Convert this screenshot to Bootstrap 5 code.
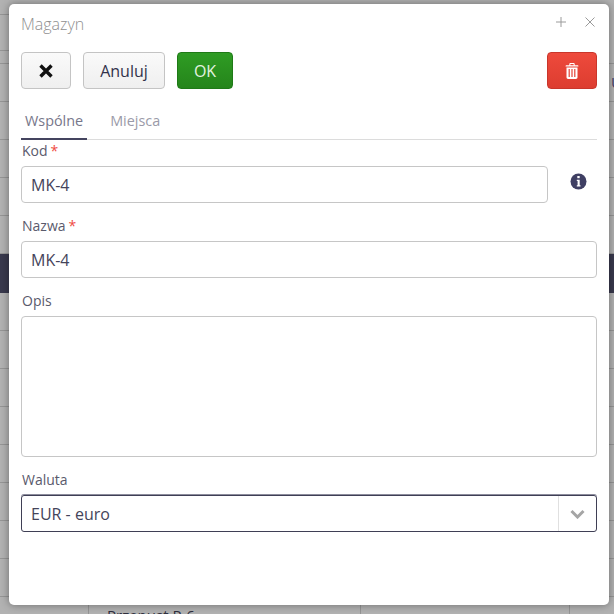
<!DOCTYPE html>
<html lang="pl">
<head>
  <meta charset="UTF-8" />
  <title>Magazyn</title>
  <link href="https://cdn.jsdelivr.net/npm/bootstrap@5.3.3/dist/css/bootstrap.min.css" rel="stylesheet">
  <style>
    html, body { height:100%; overflow:hidden }
    body { background:#fff; font-family:"Open Sans", sans-serif; color:#4a4a5a; position:relative }

    /* page behind the dialog */
    .bg-rows { height:614px; overflow:hidden }
    .bg-row { height:38px; border-bottom:1px solid #d6d6d6; display:flex; color:#44445a; font-size:15px }
    .bg-row.first { height:64px }
    .bg-row.head { height:39px; background:#52526f; border:0 }
    .bg-stub { width:9px; height:37px; margin-top:14px; border-top:1px solid #d6d6d6; border-bottom:1px solid #d6d6d6 }
    .bg-row .cell { flex:none; border-left:1px solid #d6d6d6; padding:7px 18px; white-space:nowrap }
    .bg-row .c1 { width:88px; border-left:0 }
    .bg-row .c2 { width:272px }
    .bg-row .c3 { width:209px }
    .bg-row .c4 { width:45px; padding:7px 0 0 41px; color:#5b5b9a; overflow:hidden }
    .backdrop { position:absolute; inset:0; background:rgba(0,0,0,.3) }

    .dlg { position:absolute; left:9px; top:4px; width:600px; height:601px; border:0; border-radius:5px;
           padding:0 12px; box-shadow:0 0 8px rgba(0,0,0,.4) }
    .dlg-title { font-size:16px; font-weight:300; color:#8f8f8f; height:48px; padding-top:9px; line-height:22px }
    .win-btns { position:absolute; right:13px; top:12px; gap:17px }
    .win-btns svg { display:block }

    .dlg .btn { height:37px; font-size:16px; line-height:22px; padding:0; border-radius:4px }
    .btn-plain { background:linear-gradient(#fafafa,#efefef); border:1px solid #c4c4c4; color:#32324a; width:82px }
    .btn-plain.close-x { width:50px; color:#111 }
    .btn-ok { background:linear-gradient(#2f9c24,#25851b); border:1px solid #1f7a17; color:#e4f3e0; width:56px }
    .btn-del { background:linear-gradient(#ee4a3c,#dd3d30); border:1px solid #c9362b; color:#fff; width:50px }
    .dlg .btn svg { display:block; margin:auto }

    .dlg-tabs { border-bottom:1px solid #dcdcdc; margin-top:13px; height:38px; margin-bottom:1px }
    .dlg-tabs a { display:block; font-size:14.4px; line-height:20px; padding:9px 4px 0; height:38px; color:#9a9aa8; text-decoration:none }
    .dlg-tabs a.active { color:#77778a; border-bottom:2px solid #44445f }
    .dlg-tabs li:first-child { margin-right:19px }

    .fld-label { display:block; font-size:14px; line-height:20px; margin:0 0 5px 1px; height:20px; color:#5a5a6c }
    .fld-label b { color:#ef4a3f; font-weight:400; margin-left:3px }
    .dlg .form-control { height:37px; border:1px solid #c6c6c6; border-radius:4px; color:#44445a; font-size:16px;
                         padding:0 9px; font-family:inherit; box-shadow:none }
    .dlg textarea.form-control { height:141px; resize:none; padding:6px 9px }
    .fld { margin-bottom:13px }
    .info-slot { width:49px; flex:none; padding:0 10px 13px 0 }
    .pick { height:37px; border:1px solid #3f3f55; box-shadow:0 -1px 0 #8c8c9c; border-radius:3px; font-size:16px; color:#44445a }
    .pick .val { flex:1; padding-left:9px; line-height:36px }
    .pick .arrow { width:38px; border-left:1px solid #e0e0e0 }
  </style>
</head>
<body>

<div class="bg-rows">
  <div class="bg-row first"><div class="bg-stub"></div></div>
  <div class="bg-row"><div class="cell c1"></div><div class="cell c2"></div><div class="cell c3"></div><div class="cell c4">U</div></div>
  <div class="bg-row"></div>
  <div class="bg-row"></div>
  <div class="bg-row"></div>
  <div class="bg-row"></div>
  <div class="bg-row head"></div>
  <div class="bg-row"></div>
  <div class="bg-row"></div>
  <div class="bg-row"></div>
  <div class="bg-row"></div>
  <div class="bg-row"></div>
  <div class="bg-row"></div>
  <div class="bg-row"></div>
  <div class="bg-row"></div>
  <div class="bg-row"><div class="cell c1"></div><div class="cell c2">Przepust P-6</div><div class="cell c3"></div><div class="cell c4"></div></div>
</div>
<div class="backdrop"></div>

<div class="dlg modal-content bg-white">
  <div class="dlg-title">Magazyn</div>
  <div class="win-btns d-flex">
    <svg width="12" height="12" viewBox="0 0 12 12"><path d="M6 1v10M1 6h10" stroke="#9a9a9a" fill="none"/></svg>
    <svg width="12" height="12" viewBox="0 0 12 12"><path d="M1.500 1.500l9 9M10.500 1.500l-9 9" stroke="#9a9a9a" fill="none"/></svg>
  </div>

  <div class="d-flex gap-2">
    <button class="btn btn-plain close-x me-1">
      <svg width="16" height="14" viewBox="0 0 16 14"><path d="M2.500 1.500l11 11M13.500 1.500l-11 11" stroke="#111" stroke-width="3.400" fill="none"/></svg>
    </button>
    <button class="btn btn-plain me-1">Anuluj</button>
    <button class="btn btn-ok">OK</button>
    <button class="btn btn-del ms-auto">
      <svg width="14" height="16" viewBox="0 0 14 16" fill="#fff">
        <path fill-rule="evenodd" d="M4.300 2.300V1.200C4.300.5 4.800 0 5.500 0h3c.7 0 1.200.5 1.200 1.200v1.100h3.100c.3 0 .6.300.6.600v.5H.6v-.5c0-.3.300-.6.600-.6zM5.400 2.300h3.200V1.100H5.400z"/>
        <path fill-rule="evenodd" d="M1.500 4.400h11v9.900c0 .9-.7 1.700-1.600 1.700H3.100c-.9 0-1.600-.8-1.600-1.700zM3.600 6v8h1.200V6zm2.800 0v8h1.200V6zm2.800 0v8h1.200V6z"/>
      </svg>
    </button>
  </div>

  <ul class="dlg-tabs nav">
    <li class="nav-item"><a class="active" href="#">Wspólne</a></li>
    <li class="nav-item"><a href="#">Miejsca</a></li>
  </ul>

  <form>
    <div class="fld d-flex">
      <div class="flex-grow-1">
        <label class="fld-label">Kod<b>*</b></label>
        <input class="form-control" value="MK-4">
      </div>
      <div class="info-slot d-flex justify-content-end align-items-end">
        <svg width="17" height="17" viewBox="0 0 17 17">
          <circle cx="8.500" cy="8.500" r="8" fill="#3f3f63"/>
          <rect x="7.300" y="3" width="2.400" height="2.200" fill="#fff"/>
          <path d="M6.800 6.800h2.900v5.500h.8v1.200H6.800v-1.200h.8V8H6.800z" fill="#fff"/>
        </svg>
      </div>
    </div>
    <div class="fld">
      <label class="fld-label">Nazwa<b>*</b></label>
      <input class="form-control" value="MK-4">
    </div>
    <div class="fld">
      <label class="fld-label">Opis</label>
      <textarea class="form-control"></textarea>
    </div>
    <div>
      <label class="fld-label">Waluta</label>
      <div class="pick d-flex">
        <div class="val">EUR - euro</div>
        <div class="arrow d-flex align-items-center justify-content-center">
          <svg width="15" height="10" viewBox="0 0 15 10"><path d="M1.500 2l6 6 6-6" stroke="#a5a5a5" stroke-width="3" fill="none"/></svg>
        </div>
      </div>
    </div>
  </form>
</div>

<script src="https://cdn.jsdelivr.net/npm/bootstrap@5.3.3/dist/js/bootstrap.bundle.min.js"></script>
</body>
</html>
